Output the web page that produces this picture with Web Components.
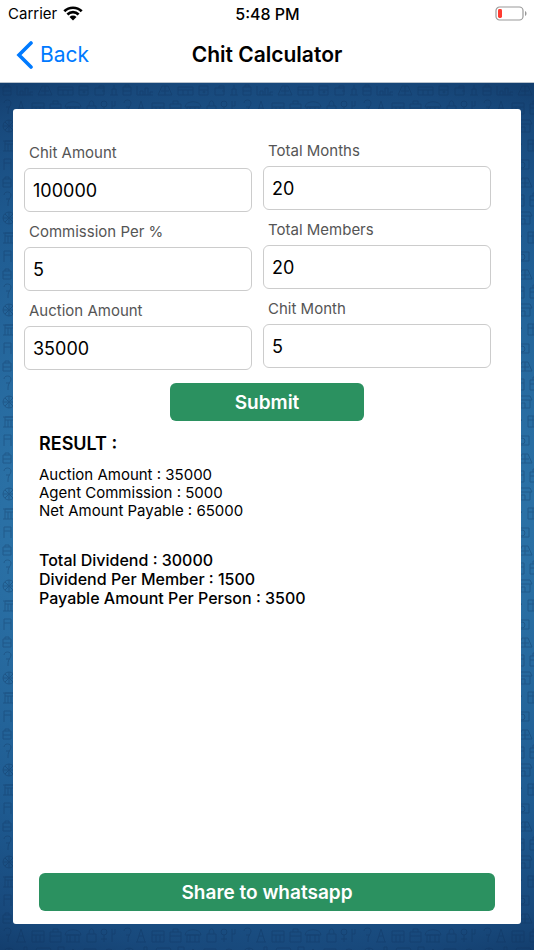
<!DOCTYPE html>
<html lang="en">
<head>
<meta charset="utf-8">
<meta name="viewport" content="width=device-width, initial-scale=1">
<title>Chit Calculator</title>
<style>
  html, body {
    height: 100%;
    margin: 0;
  }
  body {
    font-family: Inter, "Liberation Sans", sans-serif;
    color: #000;
    background: #fff;
  }
</style>
</head>
<body>
<chit-app>
  <status-bar slot="header" carrier="Carrier" time="5:48 PM"></status-bar>
  <nav-bar slot="header" back="Back">Chit Calculator</nav-bar>
  <chit-calculator></chit-calculator>
</chit-app>

<script>
// Builds a template element from a string of markup
function makeTemplate(html) {
  const template = document.createElement('template');
  template.innerHTML = html;
  return template;
}

const appTemplate = makeTemplate(`
  <style>
  :host {
    display: flex;
    flex-direction: column;
    min-height: 100vh;
  }
  main {
    flex: 1;
    display: grid;
    border-top: 1px solid #b9c3cd;
    background: radial-gradient(ellipse 130% 55% at 50% 50%, #2e78ad 0%, #2a70a5 38%, #1e5a90 72%, #18497c 91%, #123c6b 100%);
  }
  main > * {
    grid-area: 1 / 1;
  }
  .content {
    display: flex;
    padding: 26px 13px;
  }
  ::slotted(chit-calculator) {
    flex: 1;
  }
  </style>
  <header><slot name="header"></slot></header>
  <main>
    <shop-pattern></shop-pattern>
    <div class="content"><slot></slot></div>
  </main>
`);

// Faint shop icons repeated over the blue background
const patternTemplate = makeTemplate(`
  <style>
  :host {
    display: block;
    overflow: hidden;
    contain: size;
  }
  svg {
    display: block;
    width: 100%;
    height: 100%;
  }
  </style>
  <svg aria-hidden="true">
    <defs>
      <pattern id="shops" width="120" height="92" patternUnits="userSpaceOnUse">
        <g fill="none" stroke="#0b2c55" stroke-width="1">
          <path d="M3 4h8v8H3zM5 4V2h4v2M3 8h8"/>
          <path d="M17 12V3M17 12h16M20 12V8h3v4M25 12V5h3v7M30 12V9h3"/>
          <path d="M38 12l4-9h6l4 9zM41 8h8M45 3v9"/>
          <path d="M58 4h15v8H58zM58 7h15M63 7v5M68 7v5"/>
          <path d="M79 3h9v9h-9zM79 7h9"/><circle cx="84" cy="9" r="1"/>
          <path d="M95 5h9v7h-9zM99 5V3h5v2M102 8h3"/>
          <path d="M110 12h8M112 12V6h4v6M114 6V2"/>
          <path d="M4 20c0-4 7-4 7 0 0 3-3 4-3 9M6 24h4M8 29v2"/>
          <path d="M17 31l4-13 4 13M19 25h4M16 31h10"/>
          <path d="M32 20h12v11H32zM32 24h12M36 24v7M40 24v7"/>
          <path d="M50 21h11v10H50zM53 21v-3h5v3M50 25h11"/>
          <path d="M66 31h14M67 31v-7h12v7M65 24c0-7 16-7 16 0zM70 24v7M75 24v7"/>
          <path d="M87 23h9v8h-9zM89 23c0-7 5-7 5 0"/>
          <circle cx="104" cy="21" r="3"/><path d="M104 24v7M101 28h6M112 18v13M115 18v5h-3"/>
          <circle cx="9" cy="43" r="6"/><path d="M3 43h12M9 37v12M5 39l8 8M13 39l-8 8"/>
          <path d="M21 49V40h9v9zM24 40v-4h3v4M21 44h9"/>
          <path d="M37 37h13l2 4H35zM37 41v8h13v-8M41 49v-5h4v5"/>
          <path d="M58 36h6v13h-6zM58 40h6M60 46h2M69 49V42l4-4 4 4v7z"/>
          <path d="M84 38h12v10H84zM84 42h12M87 45h3"/><circle cx="109" cy="43" r="5"/><path d="M109 40v3l3 1"/>
          <path d="M3 68h13M5 68V58h9v10M5 61h9M8 61v7M11 61v7M3 58h13"/>
          <path d="M23 56v12h6V60l-2-2v-3h-3zM23 62h6"/>
          <path d="M36 56l2 4 4 1-3 3 1 4-4-2-4 2 1-4-3-3 4-1z"/>
          <path d="M48 57h10v11H48zM48 61h10M53 57v11"/><path d="M65 68V57h8v11zM65 63l8-6"/>
          <path d="M80 68V60h14v8M79 60l2-4h12l2 4M84 68v-5h5v5"/><path d="M102 57h11v9h-11zM105 69h6M108 66v3"/>
          <path d="M4 87V76h7v11M4 80h7M18 87V80l5-5 5 5v7zM21 87v-5h4v5"/>
          <path d="M35 77h14v9H35z"/><circle cx="42" cy="82" r="3"/>
          <path d="M57 87V77M61 87V79M55 77h8M70 76h8v11h-8zM72 79h4M72 82h4"/>
          <path d="M85 87c-3-9 12-9 9 0zM88 79v-4h4v4M101 79h14l-2 8h-10zM103 79l3-4h4l3 4"/>
        </g>
      </pattern>
    </defs>
    <rect width="100%" height="100%" fill="url(#shops)" opacity=".32"/>
  </svg>
`);

const statusTemplate = makeTemplate(`
  <style>
  :host {
    display: grid;
    grid-template-columns: 1fr auto 1fr;
    align-items: center;
    height: 27px;
    padding: 0 7px 0 8px;
    font-size: 15px;
    line-height: 18px;
  }
  .carrier {
    display: flex;
    align-items: center;
    gap: 6px;
  }
  .time {
    font-size: 16px;
    font-weight: 500;
  }
  .battery {
    justify-self: end;
  }
  svg {
    display: block;
  }
  </style>
  <div class="carrier">
    <span id="carrier"></span>
    <svg width="20" height="15" viewBox="0 0 20 15" role="img" aria-label="Wi-Fi">
      <path d="M1.3 5.3a12.4 12.4 0 0 1 17.4 0M4.4 8.5a8 8 0 0 1 11.2 0" fill="none" stroke="#000" stroke-width="2.7"/>
      <path d="M10 14.5l-3.500-3.500a5 5 0 0 1 7 0z"/>
    </svg>
  </div>
  <span class="time" id="time"></span>
  <svg class="battery" width="32" height="16" viewBox="0 0 32 16" role="img" aria-label="Battery low">
    <rect x="1" y="1" width="27" height="13" rx="3.6" fill="none" stroke="#999" stroke-width="1.2"/>
    <rect x="3" y="3" width="4" height="9" rx="1.4" fill="#ff3b30"/>
    <path d="M30 5c2 .8 2 4.2 0 5z" fill="#999"/>
  </svg>
`);

const navTemplate = makeTemplate(`
  <style>
  :host {
    display: grid;
    grid-template-columns: 1fr auto 1fr;
    align-items: center;
    height: 55px;
    padding: 0 16px;
  }
  a {
    display: flex;
    align-items: center;
    gap: 7px;
    color: #007aff;
    font-size: 21px;
    line-height: 28px;
    text-decoration: none;
  }
  h1 {
    margin: 0;
    font-size: 21px;
    line-height: 28px;
    font-weight: 600;
  }
  </style>
  <a href="#">
    <svg width="17" height="28" viewBox="0 0 17 28" aria-hidden="true">
      <path d="M15 2L3 14l12 12" fill="none" stroke="#007aff" stroke-width="3.6" stroke-linecap="round" stroke-linejoin="miter"/>
    </svg>
    <span id="back"></span>
  </a>
  <h1><slot></slot></h1>
`);

const fieldTemplate = makeTemplate(`
  <style>
  :host {
    display: flex;
    flex-direction: column;
    gap: 6px;
  }
  label {
    padding-left: 5px;
    color: #555;
    font-size: 15px;
    line-height: 18px;
  }
  input {
    box-sizing: border-box;
    width: 100%;
    height: 44px;
    margin: 0;
    padding: 0 8px;
    border: 1px solid #ccc;
    border-radius: 6px;
    background: #fff;
    color: #000;
    font: inherit;
    font-size: 18px;
    outline: none;
  }
  input:focus {
    border-color: #2b9160;
  }
  </style>
  <label for="field"></label>
  <input id="field" type="text" inputmode="numeric">
`);

const buttonTemplate = makeTemplate(`
  <style>
  :host {
    display: block;
  }
  button {
    display: block;
    width: 100%;
    height: 38px;
    margin: 0;
    padding: 0;
    border: 0;
    border-radius: 6px;
    background: #2b9160;
    color: #fff;
    font: inherit;
    font-size: 19px;
    font-weight: 600;
    cursor: pointer;
  }
  </style>
  <button type="button"><slot></slot></button>
`);

const calculatorTemplate = makeTemplate(`
  <style>
  :host {
    display: flex;
    flex-direction: column;
    box-sizing: border-box;
    padding: 33px 0 13px;
    border-radius: 3px;
    background: #fff;
  }
  .fields {
    display: flex;
    gap: 11px;
    padding: 0 30px 0 11px;
  }
  .column {
    flex: 1;
    display: flex;
    flex-direction: column;
    gap: 11px;
  }
  .column:first-child {
    padding-top: 2px;
  }
  .submit {
    width: 38%;
    margin: 13px auto 0;
  }
  .result {
    padding: 11px 26px 0;
    font-size: 15px;
    line-height: 18px;
  }
  h2 {
    margin: 0 0 10px;
    font-size: 18px;
    line-height: 24px;
    font-weight: 600;
  }
  p {
    margin: 0;
  }
  .share-info {
    margin-top: 31px;
    font-size: 16px;
    line-height: 19px;
    font-weight: 500;
  }
  .share {
    margin: auto 26px 0;
  }
  </style>
  <div class="fields">
    <div class="column">
      <chit-field id="amount" label="Chit Amount" value="100000"></chit-field>
      <chit-field id="commission" label="Commission Per %" value="5"></chit-field>
      <chit-field id="auction" label="Auction Amount" value="35000"></chit-field>
    </div>
    <div class="column">
      <chit-field id="months" label="Total Months" value="20"></chit-field>
      <chit-field id="members" label="Total Members" value="20"></chit-field>
      <chit-field id="month" label="Chit Month" value="5"></chit-field>
    </div>
  </div>
  <chit-button class="submit">Submit</chit-button>
  <section class="result">
    <h2>RESULT :</h2>
    <div id="totals"></div>
    <div id="shares" class="share-info"></div>
  </section>
  <chit-button class="share">Share to whatsapp</chit-button>
`);

// Base class that clones a template into an open shadow root
class TemplateElement extends HTMLElement {
  constructor(template) {
    super();
    this.attachShadow({ mode: 'open' });
    this.shadowRoot.appendChild(template.content.cloneNode(true));
  }
  find(selector) {
    return this.shadowRoot.querySelector(selector);
  }
}

class ChitApp extends TemplateElement {
  constructor() {
    super(appTemplate);
  }
}

class ShopPattern extends TemplateElement {
  constructor() {
    super(patternTemplate);
  }
}

class StatusBar extends TemplateElement {
  constructor() {
    super(statusTemplate);
  }
  connectedCallback() {
    this.find('#carrier').textContent = this.getAttribute('carrier');
    this.find('#time').textContent = this.getAttribute('time');
  }
}

class NavBar extends TemplateElement {
  constructor() {
    super(navTemplate);
  }
  connectedCallback() {
    this.find('#back').textContent = this.getAttribute('back');
  }
}

class ChitField extends TemplateElement {
  constructor() {
    super(fieldTemplate);
  }
  connectedCallback() {
    this.find('label').textContent = this.getAttribute('label');
    this.find('input').value = this.getAttribute('value');
  }
  get number() {
    return Number(this.find('input').value) || 0;
  }
}

class ChitButton extends TemplateElement {
  constructor() {
    super(buttonTemplate);
  }
}

class ChitCalculator extends TemplateElement {
  constructor() {
    super(calculatorTemplate);
  }
  connectedCallback() {
    this.find('.submit').addEventListener('click', () => this.calculate());
    this.find('.share').addEventListener('click', () => this.share());
    this.calculate();
  }
  // Works out the dividend and writes the result lines
  calculate() {
    const amount = this.find('#amount').number;
    const auction = this.find('#auction').number;
    const members = this.find('#members').number || 1;
    const commission = amount * this.find('#commission').number / 100;
    const dividend = auction - commission;
    const perMember = dividend / members;
    this.showLines('#totals', [
      `Auction Amount : ${auction}`,
      `Agent Commission : ${commission}`,
      `Net Amount Payable : ${amount - auction}`
    ]);
    this.showLines('#shares', [
      `Total Dividend : ${dividend}`,
      `Dividend Per Member : ${perMember}`,
      `Payable Amount Per Person : ${amount / members - perMember}`
    ]);
  }
  showLines(selector, lines) {
    this.find(selector).replaceChildren(...lines.map(line => {
      const p = document.createElement('p');
      p.textContent = line;
      return p;
    }));
  }
  share() {
    const lines = [...this.shadowRoot.querySelectorAll('.result p')].map(p => p.textContent);
    window.open('whatsapp://send?text=' + encodeURIComponent(lines.join('\n')));
  }
}

customElements.define('shop-pattern', ShopPattern);
customElements.define('status-bar', StatusBar);
customElements.define('nav-bar', NavBar);
customElements.define('chit-field', ChitField);
customElements.define('chit-button', ChitButton);
customElements.define('chit-calculator', ChitCalculator);
customElements.define('chit-app', ChitApp);
</script>
</body>
</html>
